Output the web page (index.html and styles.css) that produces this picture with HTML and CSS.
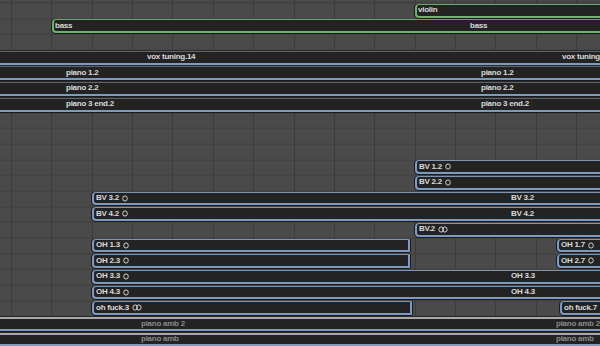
FILE: index.html
```html
<!DOCTYPE html>
<html>
<head>
    <title>Arrange</title>
    <link rel="stylesheet" href="styles.css">
</head>
<body>
    <div class="arrange">
        <div class="track">
            <div class="region green start at-415">
                <span class="seg pad-1">violin</span>
            </div>
        </div>
        <div class="track">
            <div class="region green start at-52">
                <span class="seg pad-1">bass</span>
                <span class="seg pad-1">bass</span>
            </div>
        </div>
        <div class="track"></div>
        <div class="track">
            <div class="region">
                <span class="seg pad-147">vox tuning.14</span>
                <span class="seg pad-147">vox tuning.14</span>
            </div>
        </div>
        <div class="track">
            <div class="region">
                <span class="seg pad-66">piano 1.2</span>
                <span class="seg pad-66">piano 1.2</span>
            </div>
        </div>
        <div class="track">
            <div class="region">
                <span class="seg pad-66">piano 2.2</span>
                <span class="seg pad-66">piano 2.2</span>
            </div>
        </div>
        <div class="track">
            <div class="region">
                <span class="seg pad-66">piano 3 end.2</span>
                <span class="seg pad-66">piano 3 end.2</span>
            </div>
        </div>
        <div class="track"></div>
        <div class="track"></div>
        <div class="track"></div>
        <div class="track">
            <div class="region start at-415">
                <span class="seg pad-2">BV 1.2 <svg class="ico" width="6" height="7" viewBox="0 0 6 7"><ellipse cx="3" cy="3.5" rx="2.3" ry="2.6"/></svg></span>
            </div>
        </div>
        <div class="track">
            <div class="region start at-415">
                <span class="seg pad-2">BV 2.2 <svg class="ico" width="6" height="7" viewBox="0 0 6 7"><ellipse cx="3" cy="3.5" rx="2.3" ry="2.6"/></svg></span>
            </div>
        </div>
        <div class="track">
            <div class="region start at-92">
                <span class="seg pad-2">BV 3.2 <svg class="ico" width="6" height="7" viewBox="0 0 6 7"><ellipse cx="3" cy="3.5" rx="2.3" ry="2.6"/></svg></span>
                <span class="seg pad-2">BV 3.2</span>
            </div>
        </div>
        <div class="track">
            <div class="region start at-92">
                <span class="seg pad-2">BV 4.2 <svg class="ico" width="6" height="7" viewBox="0 0 6 7"><ellipse cx="3" cy="3.5" rx="2.3" ry="2.6"/></svg></span>
                <span class="seg pad-2">BV 4.2</span>
            </div>
        </div>
        <div class="track">
            <div class="region start at-415">
                <span class="seg pad-2">BV.2 <svg class="ico" width="10" height="7" viewBox="0 0 10 7"><ellipse cx="3.2" cy="3.5" rx="2.3" ry="2.6"/><ellipse cx="6.8" cy="3.5" rx="2.3" ry="2.6"/></svg></span>
            </div>
        </div>
        <div class="track">
            <div class="region start end at-92 w-318">
                <span class="seg pad-2">OH 1.3 <svg class="ico" width="6" height="7" viewBox="0 0 6 7"><ellipse cx="3" cy="3.5" rx="2.3" ry="2.6"/></svg></span>
            </div>
            <div class="region start at-147">
                <span class="seg pad-2">OH 1.7 <svg class="ico" width="6" height="7" viewBox="0 0 6 7"><ellipse cx="3" cy="3.5" rx="2.3" ry="2.6"/></svg></span>
            </div>
        </div>
        <div class="track">
            <div class="region start end at-92 w-318">
                <span class="seg pad-2">OH 2.3 <svg class="ico" width="6" height="7" viewBox="0 0 6 7"><ellipse cx="3" cy="3.5" rx="2.3" ry="2.6"/></svg></span>
            </div>
            <div class="region start at-147">
                <span class="seg pad-2">OH 2.7 <svg class="ico" width="6" height="7" viewBox="0 0 6 7"><ellipse cx="3" cy="3.5" rx="2.3" ry="2.6"/></svg></span>
            </div>
        </div>
        <div class="track">
            <div class="region start at-92">
                <span class="seg pad-2">OH 3.3 <svg class="ico" width="6" height="7" viewBox="0 0 6 7"><ellipse cx="3" cy="3.5" rx="2.3" ry="2.6"/></svg></span>
                <span class="seg pad-2">OH 3.3</span>
            </div>
        </div>
        <div class="track">
            <div class="region start at-92">
                <span class="seg pad-2">OH 4.3 <svg class="ico" width="6" height="7" viewBox="0 0 6 7"><ellipse cx="3" cy="3.5" rx="2.3" ry="2.6"/></svg></span>
                <span class="seg pad-2">OH 4.3</span>
            </div>
        </div>
        <div class="track">
            <div class="region start end at-92 w-320">
                <span class="seg pad-2">oh fuck.3 <svg class="ico" width="10" height="7" viewBox="0 0 10 7"><ellipse cx="3.2" cy="3.5" rx="2.3" ry="2.6"/><ellipse cx="6.8" cy="3.5" rx="2.3" ry="2.6"/></svg></span>
            </div>
            <div class="region start at-148">
                <span class="seg pad-2">oh fuck.7 <svg class="ico" width="6" height="7" viewBox="0 0 6 7"><ellipse cx="3" cy="3.5" rx="2.3" ry="2.6"/></svg></span>
            </div>
        </div>
        <div class="track">
            <div class="region muted">
                <span class="seg pad-141">piano amb 2</span>
                <span class="seg pad-141">piano amb 2</span>
            </div>
        </div>
        <div class="track">
            <div class="region muted">
                <span class="seg pad-141">piano amb</span>
                <span class="seg pad-141">piano amb</span>
            </div>
        </div>
    </div>
</body>
</html>
```
FILE: styles.css
```css
body {
    margin: 0;
    background: #4a4a4a;
    overflow: hidden;
    font-family: "Liberation Sans", Arial, sans-serif;
}

.arrange {
    width: 600px;
    height: 346px;
    padding-top: 3px;
    box-sizing: border-box;
    overflow: hidden;
    background-color: #4a4a4a;
    background-image:
        repeating-linear-gradient(90deg, #3c3c3c 0, #3c3c3c 1px, transparent 1px, transparent 40.36px),
        repeating-linear-gradient(180deg, #404040 0, #404040 1px, transparent 1px, transparent 15.67px);
    background-position: 11px 0, 0 2.6px;
}

.track {
    display: flex;
    height: 15.67px;
}

.region {
    flex: 1;
    display: flex;
    min-width: 0;
    overflow: hidden;
    white-space: nowrap;
    box-sizing: border-box;
    height: 13.8px;
    margin-top: 0.8px;
    background: #232323;
    border-top: 1px solid #5c6470;
    border-bottom: 2px solid #7d9ac2;
    box-shadow: 0 1px 0 #1a1a1a, 0 -1px 0 #2a2a2a;
    color: #dadada;
    font-size: 8px;
    font-weight: bold;
    letter-spacing: -0.25px;
    line-height: 10px;
}

.region.start {
    border-left: 2px solid #7d9ac2;
    border-top-color: #8095b0;
    border-radius: 4px 0 0 4px;
    box-shadow: -1px 0 0 #1c1c1c, 0 1px 0 #1a1a1a;
}

.region.end {
    flex: none;
    border-right: 2px solid #7d9ac2;
    box-shadow: -1px 0 0 #1c1c1c, 1px 0 0 #1c1c1c, 0 1px 0 #1a1a1a;
}

.region.green {
    border-color: #6cb46c;
    border-top-color: #66a866;
}

.region.muted {
    color: #8a8a8a;
    border-top: 2px solid #a8a8a8;
}

.at-415 { margin-left: 415px; }
.at-52 { margin-left: 52px; }
.at-92 { margin-left: 92px; }
.at-147 { margin-left: 147px; }
.at-148 { margin-left: 148px; }
.w-318 { width: 318px; }
.w-320 { width: 320px; }

.seg {
    flex: none;
    width: 415px;
    box-sizing: border-box;
    display: flex;
    align-items: center;
}

.pad-1 { padding-left: 1px; }
.pad-2 { padding-left: 2px; }
.pad-66 { padding-left: 66px; }
.pad-141 { padding-left: 141px; }
.pad-147 { padding-left: 147px; }

.ico {
    margin-left: 3px;
    fill: none;
    stroke: #d0d0d0;
    stroke-width: 1;
}
```
